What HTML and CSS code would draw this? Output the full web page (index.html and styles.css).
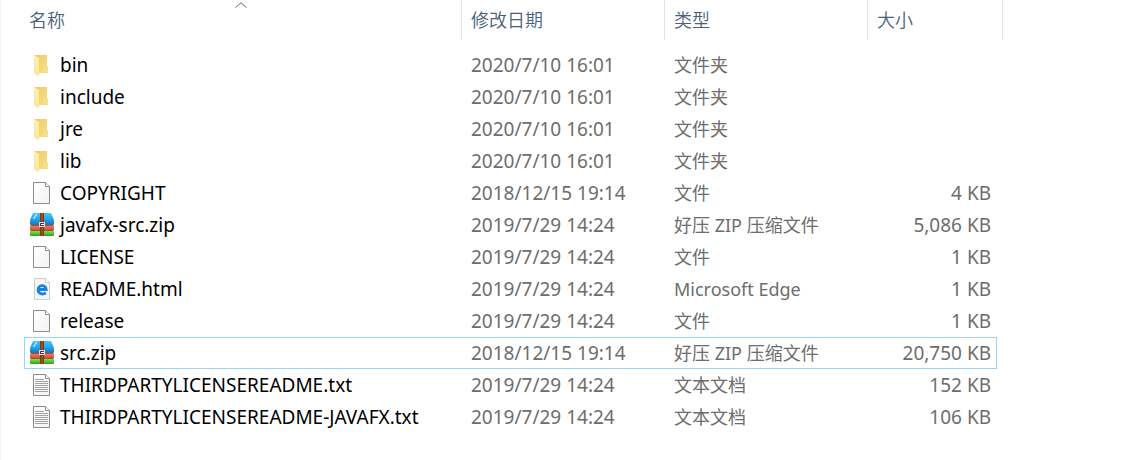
FILE: index.html
```html
<!DOCTYPE html>
<html lang="zh-CN">
<head>
  <meta charset="UTF-8">
  <meta name="viewport" content="width=device-width, initial-scale=1.0">
  <title>文件列表</title>
  <link rel="stylesheet" href="styles.css">
</head>
<body>
  <!-- Shared icons -->
  <svg class="sprite" aria-hidden="true">
    <defs>
      <linearGradient id="folder-back" x1="0" y1="0" x2="1" y2="1">
        <stop offset="0" stop-color="#eecb64"/>
        <stop offset="1" stop-color="#fbdf88"/>
      </linearGradient>
      <linearGradient id="folder-front" x1="0" y1="0" x2="0" y2="1">
        <stop offset="0" stop-color="#ffefb4"/>
        <stop offset="1" stop-color="#fde49a"/>
      </linearGradient>
      <linearGradient id="page" x1="0" y1="0" x2="1" y2="1">
        <stop offset="0" stop-color="#ffffff"/>
        <stop offset="1" stop-color="#f1f3f4"/>
      </linearGradient>
      <linearGradient id="zip-blue" x1="0" y1="0" x2="0" y2="1">
        <stop offset="0" stop-color="#4cc4f6"/>
        <stop offset="0.6" stop-color="#1fa0e6"/>
        <stop offset="1" stop-color="#1373c4"/>
      </linearGradient>
      <linearGradient id="zip-red" x1="0" y1="0" x2="0" y2="1">
        <stop offset="0" stop-color="#fa8064"/>
        <stop offset="1" stop-color="#d0452a"/>
      </linearGradient>
      <linearGradient id="zip-green" x1="0" y1="0" x2="0" y2="1">
        <stop offset="0" stop-color="#86e054"/>
        <stop offset="1" stop-color="#2f9c22"/>
      </linearGradient>
      <linearGradient id="zip-strap" x1="0" y1="0" x2="1" y2="0">
        <stop offset="0" stop-color="#6b2f12"/>
        <stop offset="0.5" stop-color="#a4582c"/>
        <stop offset="1" stop-color="#6b2f12"/>
      </linearGradient>
    </defs>
    <symbol id="icon-folder" viewBox="0 0 24 24">
      <path d="M4 2h13v11l1 1v6H4z" fill="url(#folder-back)"/>
      <path d="M4 2l5 3v18l-1-.2L4 20z" fill="url(#folder-front)"/>
    </symbol>
    <symbol id="icon-file" viewBox="0 0 24 24">
      <path d="M3.500 1.500h12l4 4v17h-16z" fill="url(#page)" stroke="#8b8b8b"/>
      <path d="M15.500 1.500v4h4" fill="#fff" stroke="#8b8b8b"/>
    </symbol>
    <symbol id="icon-text" viewBox="0 0 24 24">
      <path d="M3.500 1.500h12l4 4v17h-16z" fill="url(#page)" stroke="#8b8b8b"/>
      <path d="M15.500 1.500v4h4" fill="#fff" stroke="#8b8b8b"/>
      <path d="M5 6.500h9M5 8.500h13M5 10.500h13M5 12.500h13M5 14.500h13M5 16.500h13M5 18.500h13" stroke="#a3a3a3"/>
    </symbol>
    <symbol id="icon-html" viewBox="0 0 24 24">
      <path d="M4.500 1.500h11l4 4v17h-15z" fill="#f6f6f6" stroke="#cccccc"/>
      <path d="M15.500 1.500v4h4" fill="#fff" stroke="#cccccc"/>
      <path d="M8 12.500h8.200a4 4 0 1 0-8.100.3c0 4 4.300 5.200 7.800 3.300" fill="none" stroke="#1683e0" stroke-width="2.800"/>
    </symbol>
    <symbol id="icon-zip" viewBox="0 0 24 24">
      <path d="M0 18h24v4q0 1-1 1H1q-1 0-1-1z" fill="url(#zip-green)"/>
      <path d="M1 12h22l1 1v4l-1 1H1l-1-1v-4z" fill="url(#zip-red)"/>
      <path d="M4 0h16q1 0 1.500 1L24 7v4q0 1-1 1H1q-1 0-1-1V7l2.500-6Q3 0 4 0z" fill="url(#zip-blue)"/>
      <path d="M5.500 1h2L4.500 6H3z" fill="#c4eeff" opacity=".8"/>
      <path d="M1 12.500h22" stroke="#8a2c1e" opacity=".6"/>
      <path d="M1 17.500h22" stroke="#2a6a1c" opacity=".5"/>
      <path d="M10 0h4v23h-4z" fill="url(#zip-strap)"/>
      <path d="M9 9h6v5H9z" fill="#d9dcde"/>
      <path d="M10 10h4v3h-4z" fill="#5a3a25"/>
      <path d="M11 11h3v1h-3z" fill="#ffffff"/>
    </symbol>
  </svg>

  <main class="file-view">
    <table class="file-list">
      <colgroup>
        <col class="col-name">
        <col class="col-date">
        <col class="col-type">
        <col class="col-size">
        <col class="col-edge">
      </colgroup>
      <thead>
        <tr>
          <th class="sorted" aria-sort="ascending">名称
            <svg class="sort-arrow" viewBox="0 0 12 6" aria-hidden="true"><path d="M.5 5.500L6 .8l5.500 4.700" fill="none" stroke="#6a6a6a"/></svg>
          </th>
          <th>修改日期</th>
          <th>类型</th>
          <th colspan="2">大小</th>
        </tr>
      </thead>
      <tbody>
        <tr>
          <td><span class="name"><svg class="icon"><use href="#icon-folder"/></svg>bin</span></td>
          <td>2020/7/10 16:01</td>
          <td class="type">文件夹</td>
          <td class="size"></td>
        </tr>
        <tr>
          <td><span class="name"><svg class="icon"><use href="#icon-folder"/></svg>include</span></td>
          <td>2020/7/10 16:01</td>
          <td class="type">文件夹</td>
          <td class="size"></td>
        </tr>
        <tr>
          <td><span class="name"><svg class="icon"><use href="#icon-folder"/></svg>jre</span></td>
          <td>2020/7/10 16:01</td>
          <td class="type">文件夹</td>
          <td class="size"></td>
        </tr>
        <tr>
          <td><span class="name"><svg class="icon"><use href="#icon-folder"/></svg>lib</span></td>
          <td>2020/7/10 16:01</td>
          <td class="type">文件夹</td>
          <td class="size"></td>
        </tr>
        <tr>
          <td><span class="name"><svg class="icon"><use href="#icon-file"/></svg>COPYRIGHT</span></td>
          <td>2018/12/15 19:14</td>
          <td class="type">文件</td>
          <td class="size">4 KB</td>
        </tr>
        <tr>
          <td><span class="name"><svg class="icon"><use href="#icon-zip"/></svg>javafx-src.zip</span></td>
          <td>2019/7/29 14:24</td>
          <td class="type">好压 ZIP 压缩文件</td>
          <td class="size">5,086 KB</td>
        </tr>
        <tr>
          <td><span class="name"><svg class="icon"><use href="#icon-file"/></svg>LICENSE</span></td>
          <td>2019/7/29 14:24</td>
          <td class="type">文件</td>
          <td class="size">1 KB</td>
        </tr>
        <tr>
          <td><span class="name"><svg class="icon"><use href="#icon-html"/></svg>README.html</span></td>
          <td>2019/7/29 14:24</td>
          <td class="type">Microsoft Edge</td>
          <td class="size">1 KB</td>
        </tr>
        <tr>
          <td><span class="name"><svg class="icon"><use href="#icon-file"/></svg>release</span></td>
          <td>2019/7/29 14:24</td>
          <td class="type">文件</td>
          <td class="size">1 KB</td>
        </tr>
        <tr class="focused">
          <td><span class="name"><svg class="icon"><use href="#icon-zip"/></svg>src.zip</span></td>
          <td>2018/12/15 19:14</td>
          <td class="type">好压 ZIP 压缩文件</td>
          <td class="size">20,750 KB</td>
        </tr>
        <tr>
          <td><span class="name"><svg class="icon"><use href="#icon-text"/></svg>THIRDPARTYLICENSEREADME.txt</span></td>
          <td>2019/7/29 14:24</td>
          <td class="type">文本文档</td>
          <td class="size">152 KB</td>
        </tr>
        <tr>
          <td><span class="name"><svg class="icon"><use href="#icon-text"/></svg>THIRDPARTYLICENSEREADME-JAVAFX.txt</span></td>
          <td>2019/7/29 14:24</td>
          <td class="type">文本文档</td>
          <td class="size">106 KB</td>
        </tr>
      </tbody>
    </table>
  </main>
</body>
</html>
```
FILE: styles.css
```css
* {
  box-sizing: border-box;
}
body {
  margin: 0;
  background: #ffffff;
  color: #6d6d6d;
  font-family: "Noto Sans", "Noto Sans CJK SC", sans-serif;
  font-size: 19px;
  line-height: 30px;
}
/* not display: none, the gradients would stop painting */
.sprite {
  position: absolute;
  width: 0;
  height: 0;
}
.file-view {
  min-height: 100vh;
  padding-left: 23px;
  border-left: 1px solid #f3f3f3;
}
.file-list {
  table-layout: fixed;
  width: 979px;
  border-collapse: separate;
  border-spacing: 0;
}
.col-name {
  width: 438px;
}
.col-date,
.col-type {
  width: 203px;
}
.col-size {
  width: 129px;
}
.col-edge {
  width: 6px;
}
th {
  height: 40px;
  padding: 0 0 0 9px;
  border-right: 1px solid #e5e5e5;
  color: #4c607a;
  font-size: 18px;
  font-weight: 350;
  text-align: left;
}
.sorted {
  position: relative;
  padding-left: 5px;
}
.sort-arrow {
  position: absolute;
  top: 2px;
  left: 50%;
  width: 12px;
  height: 6px;
  margin-left: -8px;
}
/* gap between the header and the first row */
tbody::before {
  content: "";
  display: table-row;
  height: 9px;
}
td {
  height: 32px;
  padding: 0 0 0 9px;
  border-top: 1px solid transparent;
  border-bottom: 1px solid transparent;
  white-space: nowrap;
}
td:first-child {
  padding-left: 5px;
  border-left: 1px solid transparent;
  color: #000000;
}
td:last-child {
  border-right: 1px solid transparent;
}
td.type {
  font-size: 18px;
}
td.size {
  padding-right: 5px;
  text-align: right;
}
.focused td,
.focused td:first-child,
.focused td:last-child {
  border-color: #99d1ff;
}
.name {
  display: flex;
  align-items: center;
  gap: 6px;
}
.icon {
  flex: none;
  width: 24px;
  height: 24px;
}
```
